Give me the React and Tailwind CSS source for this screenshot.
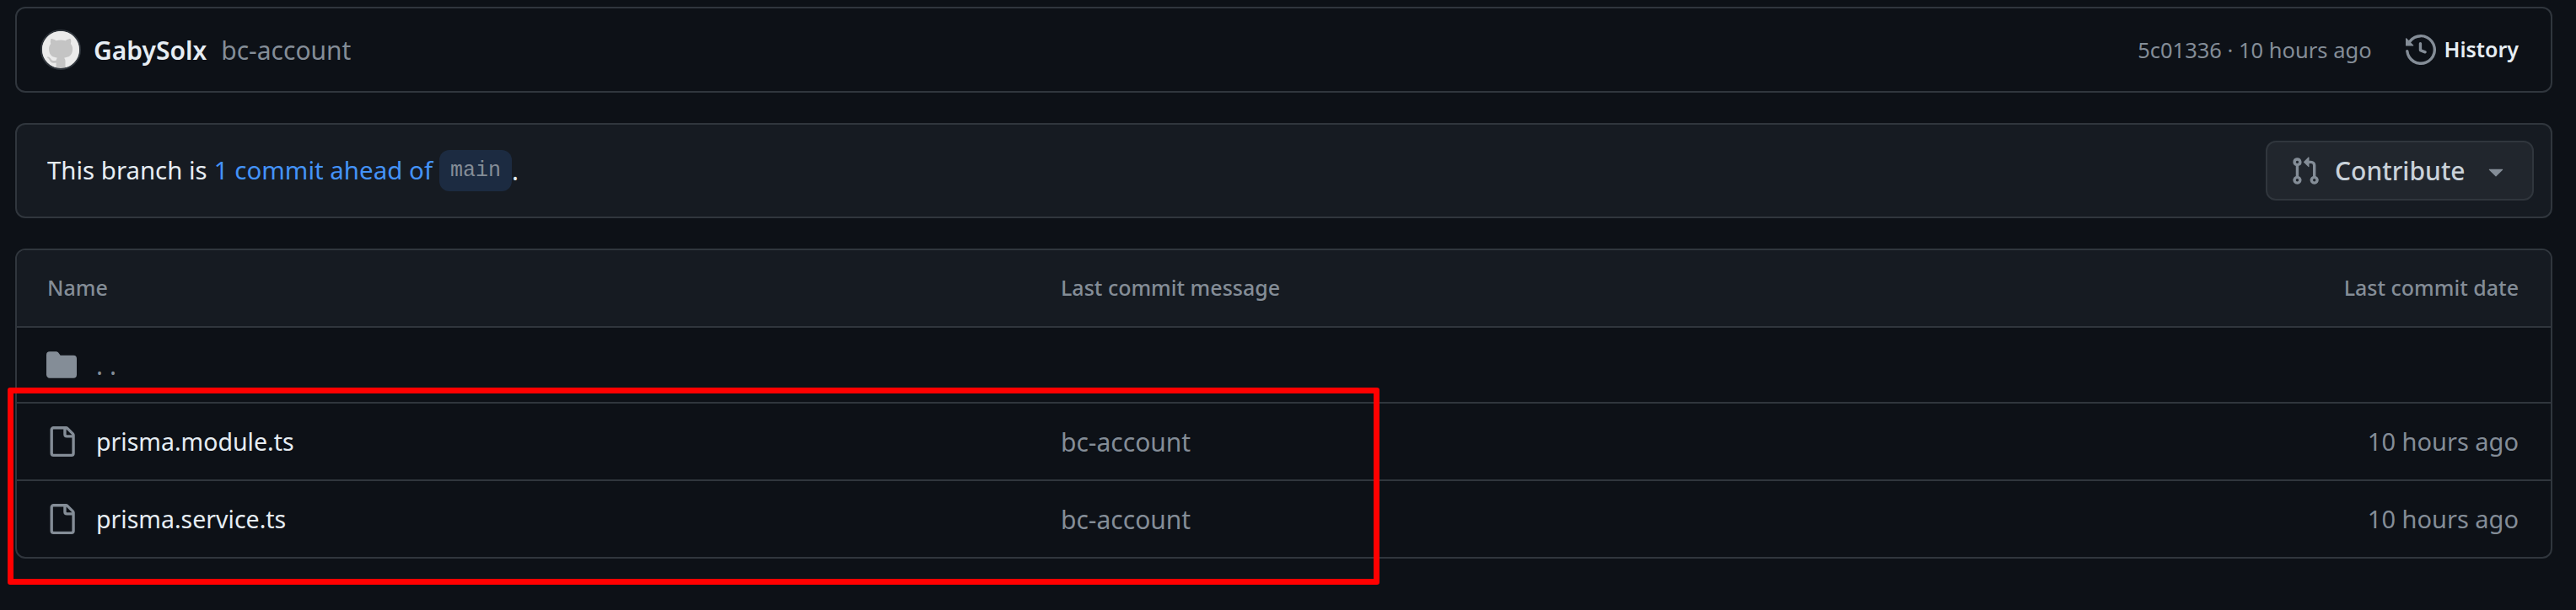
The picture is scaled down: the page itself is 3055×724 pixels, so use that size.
const FONT = "font-['Noto_Sans',sans-serif]";

function Octicon({ d, className }) {
  return (
    <svg viewBox="0 0 16 16" fill="currentColor" className={className}>
      <path d={d} />
    </svg>
  );
}

const ICONS = {
  mark: 'M8 0c4.42 0 8 3.58 8 8a8.013 8.013 0 0 1-5.45 7.59c-.4.08-.55-.17-.55-.38 0-.27.01-1.13.01-2.2 0-.75-.25-1.23-.54-1.48 1.78-.2 3.65-.88 3.65-3.95 0-.88-.31-1.59-.82-2.15.08-.2.36-1.02-.08-2.12 0 0-.67-.22-2.2.82-.64-.18-1.32-.27-2-.27-.68 0-1.36.09-2 .27-1.53-1.03-2.2-.82-2.2-.82-.44 1.1-.16 1.92-.08 2.12-.51.56-.82 1.28-.82 2.15 0 3.06 1.86 3.75 3.64 3.95-.23.2-.44.55-.5 1.02-.46.21-1.61.55-2.33-.66-.15-.24-.6-.83-1.23-.82-.67.01-.27.38.01.53.34.19.73.9.82 1.13.16.45.68 1.31 2.69.94 0 .67.01 1.3.01 1.49 0 .21-.15.45-.55.38A7.995 7.995 0 0 1 0 8c0-4.42 3.58-8 8-8Z',
  history: 'm.427 1.927 1.215 1.215a8.002 8.002 0 1 1-1.6 5.685.75.75 0 1 1 1.493-.154 6.5 6.5 0 1 0 1.18-4.458l1.358 1.358A.25.25 0 0 1 3.896 6H.25A.25.25 0 0 1 0 5.75V2.104a.25.25 0 0 1 .427-.177ZM7.75 4a.75.75 0 0 1 .75.75v2.992l2.028.812a.75.75 0 0 1-.557 1.392l-2.5-1A.751.751 0 0 1 7 8.25v-3.5A.75.75 0 0 1 7.75 4Z',
  pull: 'M1.5 3.25a2.25 2.25 0 1 1 3 2.122v5.256a2.251 2.251 0 1 1-1.5 0V5.372A2.25 2.25 0 0 1 1.5 3.25Zm5.677-.177L9.573.677A.25.25 0 0 1 10 .854V2.5h1A2.5 2.5 0 0 1 13.5 5v5.628a2.251 2.251 0 1 1-1.5 0V5a1 1 0 0 0-1-1h-1v1.646a.25.25 0 0 1-.427.177L7.177 3.427a.25.25 0 0 1 0-.354ZM3.75 2.5a.75.75 0 1 0 0 1.5.75.75 0 0 0 0-1.5Zm0 9.5a.75.75 0 1 0 0 1.5.75.75 0 0 0 0-1.5Zm8.25.75a.75.75 0 1 0 1.5 0 .75.75 0 0 0-1.5 0Z',
  file: 'M2 1.75C2 .784 2.784 0 3.75 0h6.586c.464 0 .909.184 1.237.513l2.914 2.914c.329.328.513.773.513 1.237v9.586A1.75 1.75 0 0 1 13.25 16h-9.5A1.75 1.75 0 0 1 2 14.25Zm1.75-.25a.25.25 0 0 0-.25.25v12.5c0 .138.112.25.25.25h9.5a.25.25 0 0 0 .25-.25V6h-2.75A1.75 1.75 0 0 1 9 4.25V1.5Zm6.75.062V4.25c0 .138.112.25.25.25h2.688l-.011-.013-2.914-2.914-.013-.011Z',
  folder: 'M1.75 1A1.75 1.75 0 0 0 0 2.75v10.5C0 14.216.784 15 1.75 15h12.5A1.75 1.75 0 0 0 16 13.25v-8.5A1.75 1.75 0 0 0 14.25 3H7.5a.25.25 0 0 1-.2-.1l-.9-1.2C6.07 1.22 5.55 1 5 1Z',
  caret: 'm4.427 7.427 3.396 3.396a.25.25 0 0 0 .354 0l3.396-3.396A.25.25 0 0 0 11.396 7H4.604a.25.25 0 0 0-.177.427Z',
};

function FileRow({ name, last }) {
  return (
    <div className={`flex items-center ${last ? 'h-[90px]' : 'h-[92px] border-b-2 border-[#30363d]'}`}>
      <div className="flex w-[1238px] items-center pl-[35px]">
        <Octicon d={ICONS.file} className="h-[36px] w-[36px] text-[#848d97]" />
        <span className="ml-[23px] text-[28.5px] text-[#e6edf3]">{name}</span>
      </div>
      <span className="text-[30px] text-[#848d97]">bc-account</span>
      <span className="ml-auto pr-[38px] text-[29px] text-[#848d97]">10 hours ago</span>
    </div>
  );
}

export default function App() {
  return (
    <div className={`relative h-[724px] w-[3055px] overflow-hidden bg-[#0d1117] px-[18px] pt-[8px] ${FONT}`}>
      <div className="flex h-[102px] w-[3009px] items-center rounded-[12px] border-2 border-[#30363d] pl-[28px] pr-[38px]">
        <div className="flex h-[48px] w-[48px] items-center justify-center rounded-full border-2 border-[#30363d] bg-[#c4c4c4]">
          <Octicon d={ICONS.mark} className="h-[44px] w-[44px] text-[#ebebeb]" />
        </div>
        <span className="ml-[15px] text-[30px] font-semibold text-[#e6edf3]">GabySolx</span>
        <span className="ml-[17px] text-[30px] text-[#848d97]">bc-account</span>
        <span className="ml-auto text-[25.5px] text-[#848d97]">5c01336 · 10 hours ago</span>
        <Octicon d={ICONS.history} className="ml-[40px] h-[36px] w-[36px] text-[#848d97]" />
        <span className="ml-[10px] text-[25px] font-semibold text-[#e6edf3]">History</span>
      </div>

      <div className="mt-[36px] flex h-[113px] w-[3009px] items-center rounded-[12px] border-2 border-[#30363d] bg-[#161b22] pl-[36px] pr-[20px]">
        <span className="text-[29.4px] text-[#e6edf3]">This branch is</span>
        <a className="ml-[8px] text-[29.5px] text-[#4493f8]">1 commit ahead of</a>
        <code className="ml-[8px] flex h-[49px] w-[86px] items-center justify-center rounded-[12px] bg-[#1c2b41] font-['Liberation_Mono',monospace] text-[25px] text-[#848d97]">main</code>
        <span className="text-[30px] text-[#e6edf3]">.</span>
        <button className="ml-auto flex h-[71px] w-[318px] items-center rounded-[12px] border-2 border-[#30363d] bg-[#21262d] pl-[27px]">
          <Octicon d={ICONS.pull} className="h-[36px] w-[36px] text-[#848d97]" />
          <span className="ml-[17px] text-[30px] font-medium text-[#c9d1d9]">Contribute</span>
          <Octicon d={ICONS.caret} className="ml-[18px] h-[36px] w-[36px] text-[#848d97]" />
        </button>
      </div>

      <div className="mt-[36px] w-[3009px] overflow-hidden rounded-[12px] border-2 border-[#30363d]">
        <div className="flex h-[92px] items-center border-b-2 border-[#30363d] bg-[#161b22] text-[25px] font-medium text-[#848d97]">
          <span className="w-[1238px] pl-[36px]">Name</span>
          <span>Last commit message</span>
          <span className="ml-auto pr-[38px]">Last commit date</span>
        </div>
        <div className="flex h-[90px] items-center border-b-2 border-[#30363d] pl-[35px]">
          <Octicon d={ICONS.folder} className="h-[36px] w-[36px] text-[#848d97]" />
          <span className="ml-[23px] text-[30px] tracking-[8px] text-[#848d97]">..</span>
        </div>
        <FileRow name="prisma.module.ts" />
        <FileRow name="prisma.service.ts" last />
      </div>

      {/* red annotation drawn over the screenshot */}
      <div className="absolute left-[9px] top-[460px] h-[234px] w-[1627px] rounded-[3px] border-[7px] border-[#ff0000]" />
    </div>
  );
}
